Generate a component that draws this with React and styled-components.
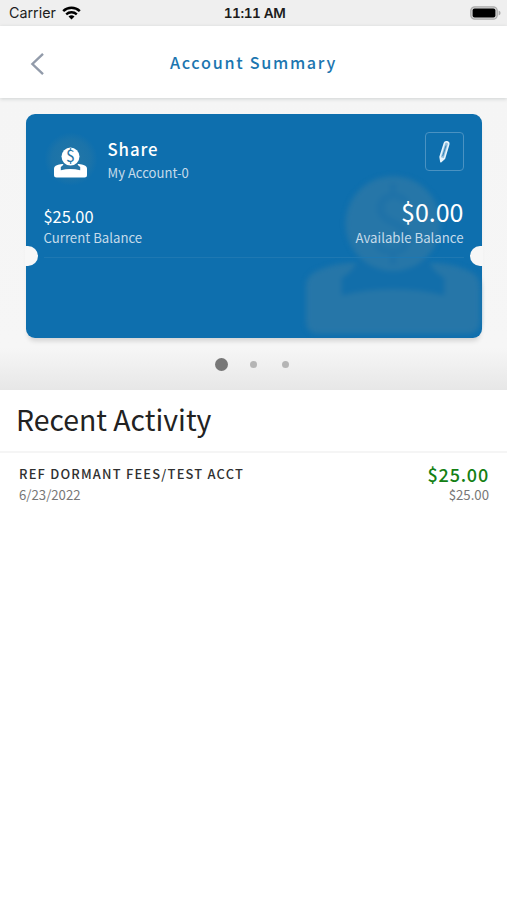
import React from 'react';
import styled, { createGlobalStyle } from 'styled-components';

const GlobalStyle = createGlobalStyle`
  * {
    box-sizing: border-box;
  }
  body {
    margin: 0;
    background: #fff;
    font-family: 'Noto Sans CJK SC', 'Noto Sans', sans-serif;
  }
  svg {
    display: block;
  }
`;

const Screen = styled.div`
  width: 507px;
  height: 900px;
  overflow: hidden;
  background: #fff;
`;

const StatusBar = styled.div`
  display: grid;
  grid-template-columns: 1fr auto 1fr;
  align-items: center;
  height: 26px;
  padding: 0 6px 0 8px;
  background: #efefef;
  font-family: Inter, 'Liberation Sans', sans-serif;
  color: #1c1c1c;
`;

const Carrier = styled.div`
  display: flex;
  align-items: center;
  gap: 6px;
  padding-left: 1px;
  font-size: 14.3px;
  line-height: 26px;
`;

const Clock = styled.div`
  padding-top: 1px;
  font-size: 13.6px;
  font-weight: 600;
  line-height: 25px;
  letter-spacing: -0.4px;
  font-feature-settings: 'tnum';
`;

const Battery = styled.div`
  justify-self: end;
`;

const Header = styled.header`
  position: relative;
  display: grid;
  grid-template-columns: 60px 1fr 60px;
  align-items: center;
  height: 72px;
  background: #fff;
  box-shadow: 0 1px 4px rgba(0, 30, 30, 0.16);
`;

const BackButton = styled.button`
  display: flex;
  width: 60px;
  padding: 3px 0 0 30px;
  border: none;
  background: none;
`;

const Title = styled.h1`
  margin: 0;
  text-align: center;
  font-size: 16.2px;
  font-weight: 500;
  line-height: 24px;
  letter-spacing: 1.7px;
  color: #1c76b0;
`;

const CardArea = styled.section`
  display: flex;
  flex-direction: column;
  align-items: center;
  height: 292px;
  padding-top: 16px;
  background: linear-gradient(#f5f5f5 0, #f6f6f6 250px, #e7e7e7 292px);
`;

const Card = styled.div`
  position: relative;
  width: 456px;
  height: 224px;
  padding: 18px 18px 0;
  border-radius: 9px;
  background: #0e6fae;
  box-shadow: 0 5px 5px -2px rgba(0, 0, 0, 0.14);
  color: #fff;
`;

const Watermark = styled.div`
  position: absolute;
  right: 2px;
  bottom: 2px;
  filter: blur(2.5px);
`;

const Notch = styled.div`
  position: absolute;
  top: 132px;
  ${({ side }) => side}: -1px;
  width: 13px;
  height: 20px;
  background: #f7f7f7;
  border-radius: ${({ side }) => (side === 'left' ? '0 10px 10px 0' : '10px 0 0 10px')};
`;

const CardTop = styled.div`
  position: relative;
  display: flex;
  height: 66px;
`;

const IconCircle = styled.div`
  display: flex;
  justify-content: center;
  width: 54px;
  height: 54px;
  padding-top: 15px;
  border-radius: 50%;
  background: radial-gradient(circle, #2476a5 0, #1b73a9 50%, #0e6fae 70%);
`;

const AccountInfo = styled.div`
  flex: 1;
  padding: 5px 0 0 10px;
`;

const AccountName = styled.div`
  font-size: 16.8px;
  font-weight: 500;
  line-height: 25px;
  letter-spacing: 0.9px;
`;

const AccountLabel = styled.div`
  font-size: 13.1px;
  line-height: 22px;
  color: #c5dbea;
`;

const EditButton = styled.button`
  display: flex;
  align-items: center;
  justify-content: center;
  width: 39px;
  height: 39px;
  padding: 0;
  border: 1px solid #4a92c2;
  border-radius: 4px;
  background: none;
`;

const Balances = styled.div`
  position: relative;
  display: flex;
  justify-content: space-between;
  align-items: flex-end;
  height: 60px;
  padding-bottom: 10px;
  border-bottom: 1px solid #1e78b2;
`;

const Balance = styled.div`
  text-align: ${({ align }) => align || 'left'};
`;

const BalanceAmount = styled.div`
  font-size: ${({ large }) => (large ? '25px' : '16.4px')};
  line-height: ${({ large }) => (large ? '36px' : '26px')};
`;

const BalanceLabel = styled.div`
  font-size: 13.2px;
  line-height: 18px;
  color: #c5dbea;
`;

const Dots = styled.div`
  display: grid;
  grid-template-columns: repeat(3, 32px);
  align-items: center;
  justify-items: center;
  height: 13px;
  margin-top: 20px;
`;

const Dot = styled.span`
  width: ${({ active }) => (active ? 13 : 7)}px;
  height: ${({ active }) => (active ? 13 : 7)}px;
  border-radius: 50%;
  background: ${({ active }) => (active ? '#777' : '#b5b5b5')};
`;

const SectionTitle = styled.h2`
  height: 63px;
  margin: 0;
  padding-left: 16px;
  border-bottom: 2px solid #f5f5f5;
  font-size: 28.4px;
  font-weight: 400;
  line-height: 57px;
  color: #222;
`;

const Transaction = styled.div`
  display: flex;
  justify-content: space-between;
  padding: 10px 18px 0 19px;
`;

const TransactionName = styled.div`
  font-size: 12.9px;
  font-weight: 500;
  line-height: 22px;
  letter-spacing: 1.2px;
  color: #303030;
`;

const TransactionAmount = styled.div`
  font-size: 18px;
  font-weight: 500;
  line-height: 22px;
  letter-spacing: 0.8px;
  color: #148014;
`;

const TransactionDetail = styled.div`
  font-size: 13.2px;
  line-height: 19px;
  text-align: ${({ align }) => align || 'left'};
  color: #777;
`;

const WifiIcon = () => (
  <svg width='19' height='14' viewBox='0 0 19 14'>
    <path d='M1.2 5.2a12 12 0 0 1 16.6 0' fill='none' stroke='#000' strokeWidth='2.5' />
    <path d='M4.2 8.4a7.6 7.6 0 0 1 10.6 0' fill='none' stroke='#000' strokeWidth='2.3' />
    <path d='M6.5 10.6a4.4 4.4 0 0 1 6 0l-3 3z' fill='#000' />
  </svg>
);

const BatteryIcon = () => (
  <svg width='31' height='14' viewBox='0 0 31 14'>
    <rect x='0.8' y='0.8' width='26.4' height='12.4' rx='4' fill='#d6d6d6' stroke='#aaa' strokeWidth='1.3' />
    <rect x='2.6' y='2.6' width='22.8' height='8.8' rx='2' fill='#000' />
    <path d='M28.6 4.6q2 .8 2 2.4t-2 2.4z' fill='#aaa' />
  </svg>
);

const SavingsIcon = ({ width, color, signColor, slotColor }) => (
  <svg width={width} height={(width * 31) / 33} viewBox='0 0 33 31'>
    <path
      d='M3.5 18C5.500 17.200 8 17 9.500 17h14c1.500 0 4 .2 6 1 3 1 3.500 2 3.500 4v6q0 2.500-2.500 2.500h-28Q0 30.500 0 28v-6c0-2 .5-3 3.500-4z'
      fill={color}
    />
    <path
      d='M9.800 16.500h13.400q.8 2.200 3 3.400v3.300q-9.700-2.400-19.400 0v-3.300q2.200-1.200 3-3.400z'
      fill={slotColor}
    />
    <circle cx='16.5' cy='9.6' r='9' fill={color} />
    <text
      x='16.5'
      y='15.4'
      textAnchor='middle'
      fontSize='16'
      fontFamily='Noto Sans CJK SC, sans-serif'
      fill={signColor}
    >
      $
    </text>
  </svg>
);

const PencilIcon = () => (
  <svg width='14' height='24' viewBox='0 0 14 24'>
    <path
      d='M7.5 3q.5-1.500 2.500-1.100 2.100.5 1.700 2.300L7.500 18.300l-3.600 3.300-.8-4.700z'
      fill='#8fbedd'
      stroke='#e8f4fc'
      strokeWidth='1.6'
      strokeLinejoin='round'
    />
    <path d='M9 5.500 5.700 16' stroke='#2b7fb5' strokeWidth='0.9' />
    <path d='m3.100 17 4.200 1.300-3.400 3.300z' fill='#e8f4fc' />
  </svg>
);

function App() {
  return (
    <Screen>
      <GlobalStyle />
      <StatusBar>
        <Carrier>
          Carrier
          <WifiIcon />
        </Carrier>
        <Clock>11:11 AM</Clock>
        <Battery>
          <BatteryIcon />
        </Battery>
      </StatusBar>

      <Header>
        <BackButton aria-label='Back'>
          <svg width='14' height='24' viewBox='0 0 14 24'>
            <path d='M13 1.800 2.400 12 13 22.200' fill='none' stroke='#929baa' strokeWidth='2.4' />
          </svg>
        </BackButton>
        <Title>Account Summary</Title>
      </Header>

      <CardArea>
        <Card>
          <Watermark>
            <SavingsIcon width={174} color='#2676a8' signColor='#1f72a8' slotColor='#126eaa' />
          </Watermark>
          <CardTop>
            <IconCircle>
              <SavingsIcon width={33} color='#fff' signColor='#2875a5' slotColor='#2875a5' />
            </IconCircle>
            <AccountInfo>
              <AccountName>Share</AccountName>
              <AccountLabel>My Account-0</AccountLabel>
            </AccountInfo>
            <EditButton aria-label='Edit'>
              <PencilIcon />
            </EditButton>
          </CardTop>
          <Balances>
            <Balance>
              <BalanceAmount>$25.00</BalanceAmount>
              <BalanceLabel>Current Balance</BalanceLabel>
            </Balance>
            <Balance align='right'>
              <BalanceAmount large>$0.00</BalanceAmount>
              <BalanceLabel>Available Balance</BalanceLabel>
            </Balance>
          </Balances>
          <Notch side='left' />
          <Notch side='right' />
        </Card>
        <Dots>
          <Dot active />
          <Dot />
          <Dot />
        </Dots>
      </CardArea>

      <SectionTitle>Recent Activity</SectionTitle>
      <Transaction>
        <div>
          <TransactionName>REF DORMANT FEES/TEST ACCT</TransactionName>
          <TransactionDetail>6/23/2022</TransactionDetail>
        </div>
        <div>
          <TransactionAmount>$25.00</TransactionAmount>
          <TransactionDetail align='right'>$25.00</TransactionDetail>
        </div>
      </Transaction>
    </Screen>
  );
}

export default App;
